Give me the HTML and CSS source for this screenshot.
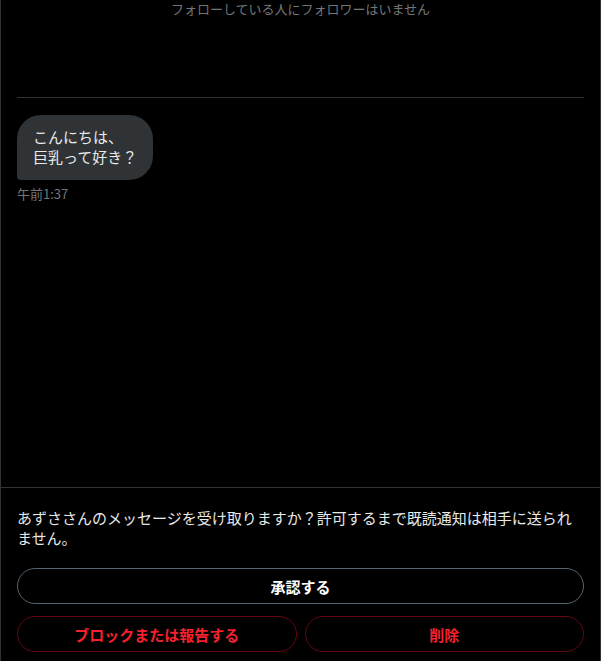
FILE: index.html
```html
<!DOCTYPE html>
<html lang="ja">
<head>
<meta charset="utf-8">
<link rel="stylesheet" href="styles.css">
</head>
<body>
<div class="panel">
  <div class="conversation">
    <div class="header-note">フォローしている人にフォロワーはいません</div>
    <div class="divider"></div>
    <div class="messages">
      <div class="bubble">こんにちは、<br>巨乳って好き？</div>
      <div class="timestamp">午前1:37</div>
    </div>
  </div>
  <div class="request">
    <p class="request-text">あずささんのメッセージを受け取りますか？許可するまで既読通知は相手に送られません。</p>
    <button class="btn btn-accept">承認する</button>
    <div class="btn-row">
      <button class="btn btn-danger">ブロックまたは報告する</button>
      <button class="btn btn-danger">削除</button>
    </div>
  </div>
</div>
</body>
</html>
```
FILE: styles.css
```css
html, body {
  margin: 0;
  padding: 0;
  background: #000;
}
body {
  font-family: "Noto Sans CJK JP", "Noto Sans", sans-serif;
  color: #e7e9ea;
}
.panel {
  width: 599px;
  height: 661px;
  border-left: 1px solid #2f3336;
  border-right: 1px solid #2f3336;
  display: flex;
  flex-direction: column;
  overflow: hidden;
}
.conversation {
  flex: 1;
  display: flex;
  flex-direction: column;
}
.header-note {
  font-size: 13px;
  line-height: 17px;
  color: #71767b;
  text-align: center;
}
.divider {
  height: 1px;
  background: #2f3336;
  margin: 80px 16px 0;
}
.messages {
  padding: 17px 16px 0;
  display: flex;
  flex-direction: column;
  align-items: flex-start;
}
.bubble {
  background: #2f3336;
  color: #e7e9ea;
  font-size: 15px;
  line-height: 20px;
  padding: 12px 16px 13px;
  border-radius: 24px 24px 24px 4px;
}
.timestamp {
  margin-top: 6px;
  font-size: 13px;
  line-height: 16px;
  color: #71767b;
}
.request {
  border-top: 1px solid #2f3336;
  margin: 0 -1px;
  padding: 20px 17px 9px;
  display: flex;
  flex-direction: column;
}
.request-text {
  margin: 0 0 20px;
  font-size: 15px;
  line-height: 20px;
  color: #e7e9ea;
}
.btn {
  font-family: "Noto Sans CJK JP", "Noto Sans", sans-serif;
  font-size: 15px;
  font-weight: 700;
  height: 36px;
  border-radius: 18px;
  background: transparent;
  cursor: pointer;
  padding: 0 16px;
}
.btn-accept {
  border: 1px solid #536471;
  color: #fff;
  width: 100%;
}
.btn-row {
  display: flex;
  gap: 8px;
  margin-top: 12px;
}
.btn-danger {
  flex: 1;
  border: 1px solid #67070f;
  color: #f4212e;
}
```
